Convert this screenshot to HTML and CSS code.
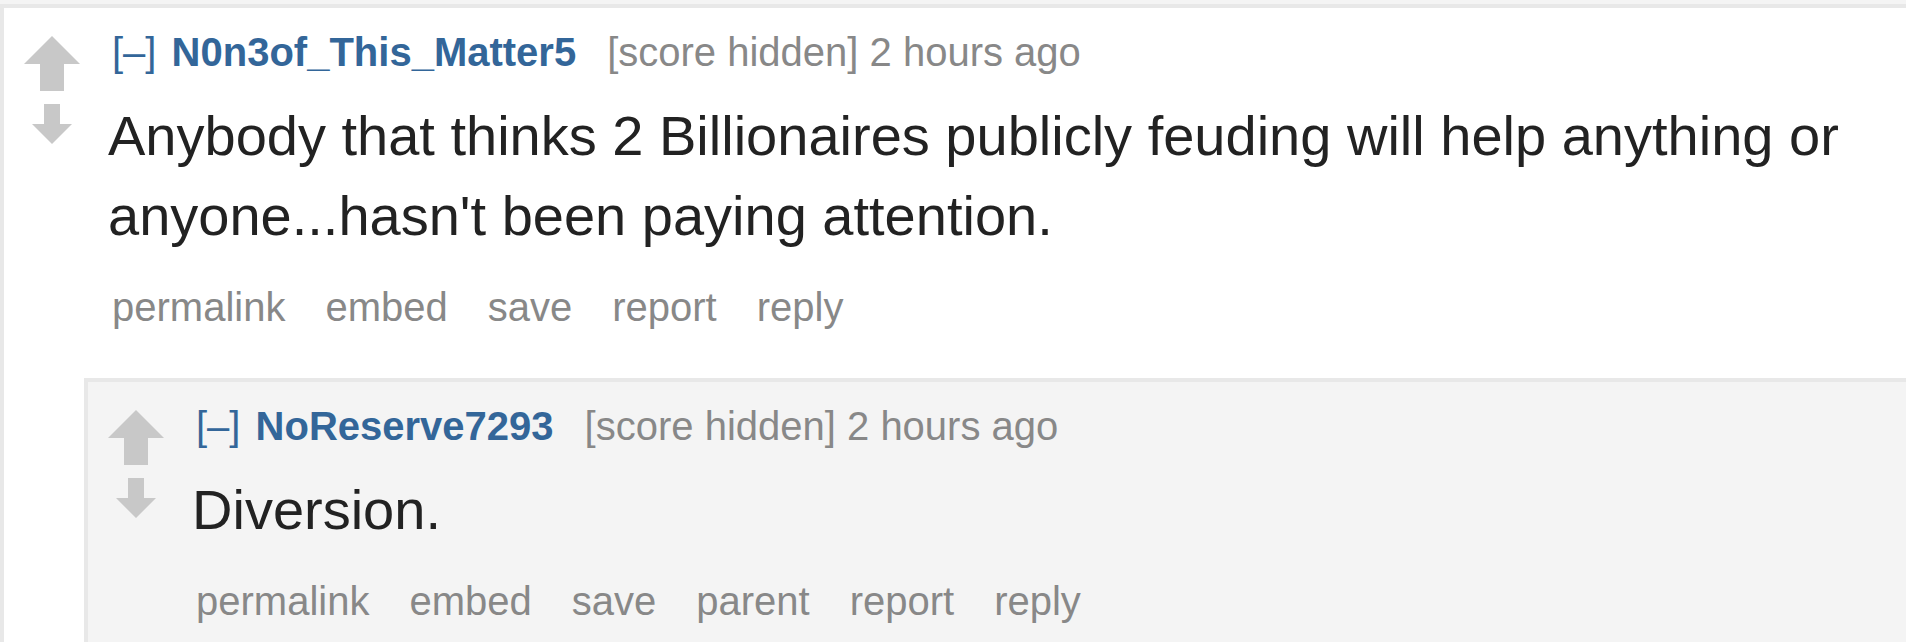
FILE: index.html
```html
<!DOCTYPE html>
<html lang="en">
<head>
    <meta charset="UTF-8">
    <meta name="viewport" content="width=device-width, initial-scale=1.0">
    <title>Comments</title>
    <link rel="stylesheet" href="styles.css">
</head>
<body>
    <div class="comment odd">
        <div class="comment-row">
            <!-- Coluna de votos -->
            <div class="midcol">
                <svg class="arrow-up" width="56" height="56" viewBox="0 0 56 56"><polygon points="28,0 56,28 40,28 40,55 16,55 16,28 0,28"/></svg>
                <svg class="arrow-down" width="40" height="40" viewBox="0 0 40 40"><polygon points="12,0 28,0 28,20 40,20 20,40 0,20 12,20"/></svg>
            </div>
            <div class="entry">
                <p class="tagline">
                    <a class="expand" href="#">[–]</a> <a class="author" href="#">N0n3of_This_Matter5</a><span class="score">[score hidden]</span> <time>2 hours ago</time>
                </p>
                <div class="md">
                    <p>Anybody that thinks 2 Billionaires publicly feuding will help anything or anyone...hasn't been paying attention.</p>
                </div>
                <ul class="flat-list">
                    <li><a href="#">permalink</a></li>
                    <li><a href="#">embed</a></li>
                    <li><a href="#">save</a></li>
                    <li><a href="#">report</a></li>
                    <li><a href="#">reply</a></li>
                </ul>
            </div>
        </div>

        <!-- Resposta -->
        <div class="comment even child">
            <div class="comment-row">
                <div class="midcol">
                    <svg class="arrow-up" width="56" height="56" viewBox="0 0 56 56"><polygon points="28,0 56,28 40,28 40,55 16,55 16,28 0,28"/></svg>
                    <svg class="arrow-down" width="40" height="40" viewBox="0 0 40 40"><polygon points="12,0 28,0 28,20 40,20 20,40 0,20 12,20"/></svg>
                </div>
                <div class="entry">
                    <p class="tagline">
                        <a class="expand" href="#">[–]</a> <a class="author" href="#">NoReserve7293</a><span class="score">[score hidden]</span> <time>2 hours ago</time>
                    </p>
                    <div class="md">
                        <p>Diversion.</p>
                    </div>
                    <ul class="flat-list">
                        <li><a href="#">permalink</a></li>
                        <li><a href="#">embed</a></li>
                        <li><a href="#">save</a></li>
                        <li><a href="#">parent</a></li>
                        <li><a href="#">report</a></li>
                        <li><a href="#">reply</a></li>
                    </ul>
                </div>
            </div>
        </div>
    </div>
</body>
</html>
```

FILE: styles.css
```css
body {
    margin: 0;
    background-color: #f4f4f4;
    font-family: "Liberation Sans", Arial, sans-serif;
    overflow: hidden;
}
a {
    text-decoration: none;
}
.comment {
    border-top: 4px solid #e8e8e8;
    border-left: 4px solid #e8e8e8;
}
.comment.odd {
    margin-top: 4px;
    background-color: #fff;
}
.comment.even {
    background-color: #f4f4f4;
}
.child {
    margin-top: 48px;
    margin-left: 80px;
    padding-bottom: 18px;
}
.comment-row {
    display: flex;
}
.midcol {
    display: flex;
    flex-direction: column;
    align-items: center;
    gap: 12px;
    width: 56px;
    margin-left: 20px;
    margin-top: 28px;
    flex-shrink: 0;
}
.midcol svg {
    display: block;
    fill: #c8c8c8;
    filter: blur(0.6px);
}
.entry {
    margin-left: 28px;
    flex: 1;
}
.tagline {
    margin: 21px 0 0 0;
    padding-left: 4px;
    font-size: 40px;
    line-height: 46px;
    color: #888;
    white-space: nowrap;
}
.tagline .expand {
    color: #369;
    margin-right: 4px;
}
.tagline .author {
    color: #369;
    font-weight: bold;
}
.tagline .score {
    margin-left: 31px;
}
.md p {
    margin: 21px 0 0 0;
    font-size: 56px;
    line-height: 80px;
    color: #222;
}
.flat-list {
    display: flex;
    gap: 40px;
    list-style: none;
    margin: 28px 0 0 0;
    padding: 0 0 0 4px;
    font-size: 40px;
    line-height: 46px;
}
.flat-list a {
    color: #888;
}
```
